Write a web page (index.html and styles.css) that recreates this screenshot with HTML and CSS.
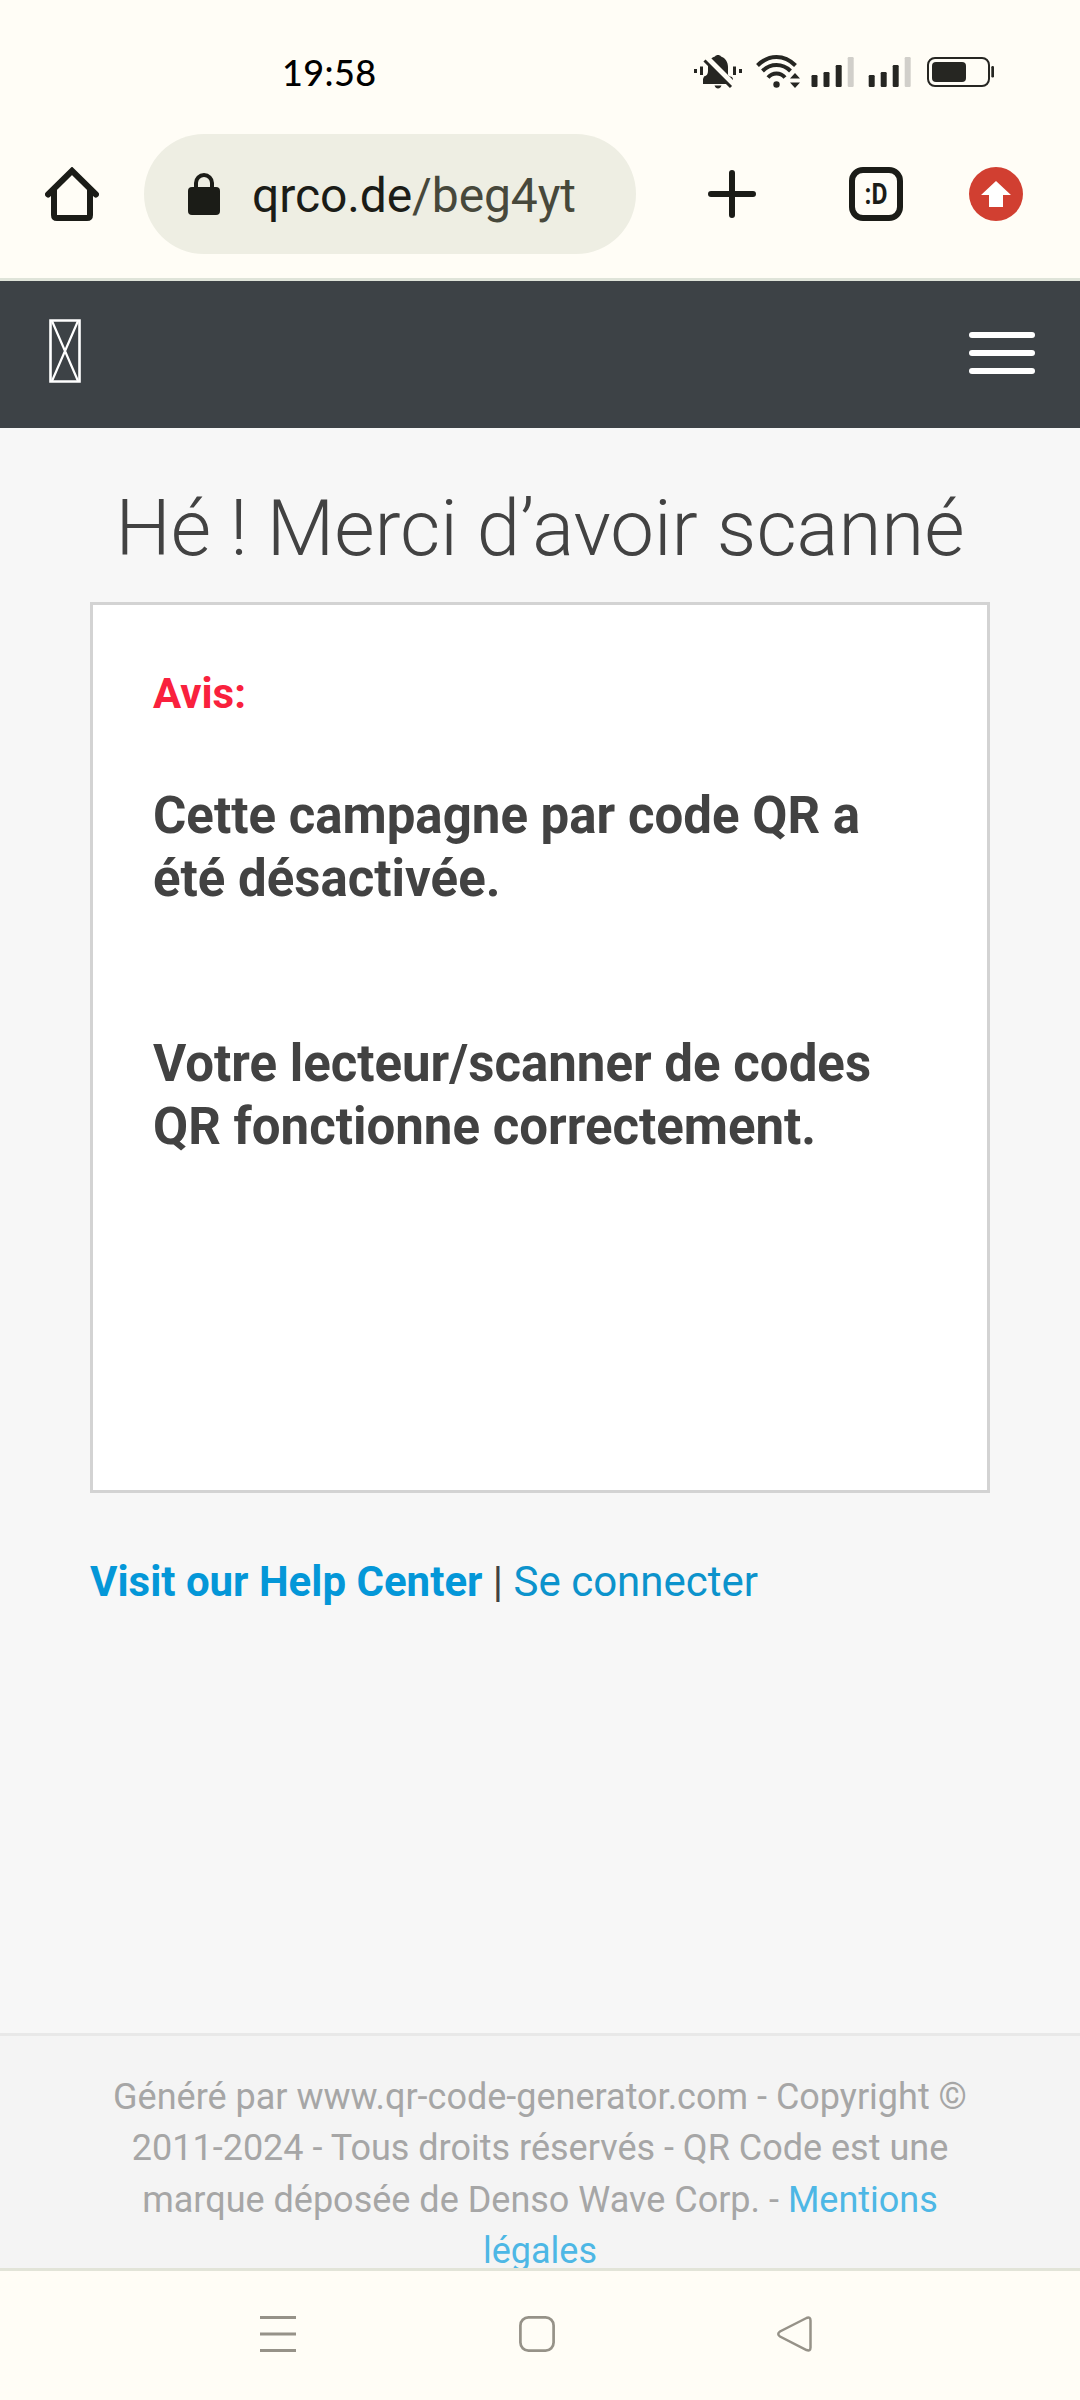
FILE: index.html
```html
<!DOCTYPE html>
<html lang="fr">
<head>
<meta charset="utf-8">
<title>Hé ! Merci d’avoir scanné</title>
<link rel="stylesheet" href="styles.css">
</head>
<body>
<div class="status-bar">
  <span class="clock">19:58</span>
  <svg class="status-icons" width="330" height="70" viewBox="0 0 330 70" fill="#262622">
    <path d="M14 29h3v4h-3zM20 26.500h3v8.500h-3zM53 26.500h3v8.500h-3zM59 29h3v4h-3z"/>
    <path d="M23 44v-5l1-2.500q4-1 4-5.500v-4c0-6 3-9.500 7-10.500 1-2 5-2 6 0 4.500 1.500 7 5.500 7 10.500v7.500q0 1.500 4 2.500l1 2v5z"/>
    <path d="M34.500 45.500h7q-1 3-3.500 3t-3.500-3z"/>
    <path d="M26 18 53 45" stroke="#fffdf6" stroke-width="7"/>
    <path d="M24.500 20.500 51 47" stroke="#262622" stroke-width="3"/>
    <g fill="none" stroke="#262622" stroke-width="4"><path d="M77.500 25.500Q86 17 96.500 17t19 8.500M82.500 31Q88.500 25 96.500 25t14 6M88 37.500q3.500-4 8.500-4t8.500 4"/></g>
    <circle cx="96.500" cy="44.500" r="3.200"/>
    <path d="M110 38.500 115 33l5 5.500zM110 42.500h10l-5 5.500z"/>
    <rect x="131.500" y="35" width="6" height="12" rx="1.200"/><rect x="143.500" y="32" width="6" height="15" rx="1.200"/><rect x="155.700" y="25" width="6" height="22" rx="1.200"/><rect x="167.700" y="17" width="6" height="30" rx="1.200" fill="#d1cfca"/>
    <rect x="188.700" y="35" width="6" height="12" rx="1.200"/><rect x="200.700" y="32" width="6" height="15" rx="1.200"/><rect x="212.700" y="25" width="6" height="22" rx="1.200"/><rect x="224.700" y="17" width="6" height="30" rx="1.200" fill="#d1cfca"/>
    <rect x="248" y="18" width="61" height="28" rx="7" fill="none" stroke="#262622" stroke-width="2"/>
    <rect x="252" y="22" width="34" height="20" rx="4"/><rect x="311.300" y="26" width="2.700" height="11.500" rx="1.200"/>
  </svg>
</div>
<div class="browser-bar">
  <svg class="home" width="54" height="54" viewBox="0 0 54 54" fill="none" stroke="#1b1c17" stroke-width="6"><path d="M9 22v26q0 3 3 3h30q3 0 3-3V22"/><path d="M3 27.500 27 3.800 51 27.500" stroke-linecap="round"/></svg>
  <div class="address">
    <svg width="32" height="42" viewBox="0 0 32 42"><path d="M8 18v-8a8 8 0 0 1 16 0v8" fill="none" stroke="#1b1c17" stroke-width="4"/><rect y="14" width="32" height="28" rx="4" fill="#1b1c17"/></svg>
    <span class="url">qrco.de<span class="path">/beg4yt</span></span>
  </div>
  <svg class="plus" width="48" height="48" viewBox="0 0 48 48" fill="none" stroke="#1b1c17" stroke-width="6" stroke-linecap="round"><path d="M24 3v42M3 24h42"/></svg>
  <div class="tabs"><span class="tabs-label">:D</span></div>
  <svg class="update" width="54" height="54" viewBox="0 0 54 54"><circle cx="27" cy="27" r="27" fill="#d13f31"/><path d="M27 14 42 28h-8v12H20V28h-8z" fill="#fff"/></svg>
</div>
<header class="site-header">
  <svg width="32" height="64" viewBox="0 0 32 64" fill="none" stroke="#fff"><path d="M1.500 1.500h29v61h-29z" stroke-width="2.600"/><path d="M3 2 29 62M29 2 3 62" stroke-width="2.200"/></svg>
  <div class="menu"><i></i><i></i><i></i></div>
</header>
<main class="content">
  <h1 class="title">Hé ! Merci d’avoir scanné</h1>
  <section class="card">
    <p class="notice">Avis:</p>
    <h2 class="message">Cette campagne par code QR a été désactivée.</h2>
    <h2 class="message">Votre lecteur/scanner de codes QR fonctionne correctement.</h2>
  </section>
  <p class="links"><a class="help">Visit our Help Center</a> | <a>Se connecter</a></p>
</main>
<footer class="footer">Généré par www.qr-code-generator.com - Copyright © 2011-2024 - Tous droits réservés - QR Code est une marque déposée de Denso Wave Corp. - <a>Mentions légales</a></footer>
<nav class="system-nav">
  <svg width="36" height="36" viewBox="0 0 36 36" stroke="#969288" stroke-width="3"><path d="M0 1.500h36M0 18h36M0 34.500h36"/></svg>
  <svg width="36" height="36" viewBox="0 0 36 36" fill="none" stroke="#969288" stroke-width="2.700"><rect x="1.400" y="1.400" width="33.200" height="33.200" rx="8"/></svg>
  <svg width="36" height="36" viewBox="0 0 36 36" fill="none" stroke="#969288" stroke-width="2.500"><path d="M29.500 2 3 15.500q-3.500 2.500 0 5L29.500 34q4 1.500 4-2.500v-27q0-4-4-2.500z"/></svg>
</nav>
</body>
</html>
```

FILE: styles.css
```css
* { box-sizing: border-box; margin: 0; padding: 0; }
body { width: 1080px; height: 2400px; display: flex; flex-direction: column; overflow: hidden; background: #f7f7f7; font-family: Roboto, "Liberation Sans", sans-serif; color: #424242; }
svg { display: block; flex: none; }

.status-bar { height: 134px; padding: 40px 70px 0 282px; display: flex; justify-content: space-between; background: #fffdf6; }
.clock { font: 500 36px/64px Lato, sans-serif; color: #000; letter-spacing: 0.400px; }

.browser-bar { height: 147px; padding: 0 57px 24px 45px; display: flex; align-items: center; background: #fffdf6; border-bottom: 3px solid #dfe4d9; }
.address { width: 492px; height: 120px; margin-left: 45px; padding-left: 44px; border-radius: 60px; display: flex; align-items: center; gap: 32px; background: #eeeee3; }
.url { font-size: 48px; line-height: 60px; color: #1b1c17; padding-top: 3px; letter-spacing: -0.100px; }
.path { color: #47483b; }
.plus { margin-left: 72px; }
.tabs { width: 54px; height: 54px; margin-left: 93px; border: 6px solid #1b1c17; border-radius: 14px; display: flex; align-items: center; justify-content: center; }
.tabs-label { font: 700 30px/30px Roboto, sans-serif; color: #1b1c17; transform: scaleX(.82); }
.update { margin-left: 66px; }

.site-header { height: 147px; padding: 38px 45px 0 49px; display: flex; justify-content: space-between; background: #3d4246; }
.menu { width: 66px; padding-top: 13px; display: flex; flex-direction: column; gap: 12px; }
.menu i { height: 6px; border-radius: 3px; background: #fff; }

.content { flex: 1; padding: 56px 90px 0; }
.title { font-weight: 300; font-size: 78px; line-height: 90px; text-align: center; white-space: nowrap; }
.card { height: 891px; margin-top: 28px; padding: 59px 60px; border: 3px solid #d3d3d3; background: #fff; }
.notice { font-weight: 700; font-size: 42px; line-height: 60px; color: #f9213d; margin-bottom: 60px; }
.message { font-weight: 700; font-size: 51px; line-height: 63.400px; margin-bottom: 121px; }
.links { margin-top: 59px; font-size: 42px; line-height: 60px; }
.links a { color: #0c93cc; }
.links .help { font-weight: 700; color: #0497d8; }

.footer { height: 235px; padding: 36px 90px 0; border-top: 3px solid #e8e8e8; background: #f4f4f4; overflow: hidden; font-size: 36px; line-height: 51.400px; text-align: center; color: #a6a6a6; }
.footer a { color: #4db7e5; }

.system-nav { height: 132px; padding: 45px 267px 0 260px; border-top: 3px solid #e2e4d8; display: flex; justify-content: space-between; background: #fffdf6; }
```
